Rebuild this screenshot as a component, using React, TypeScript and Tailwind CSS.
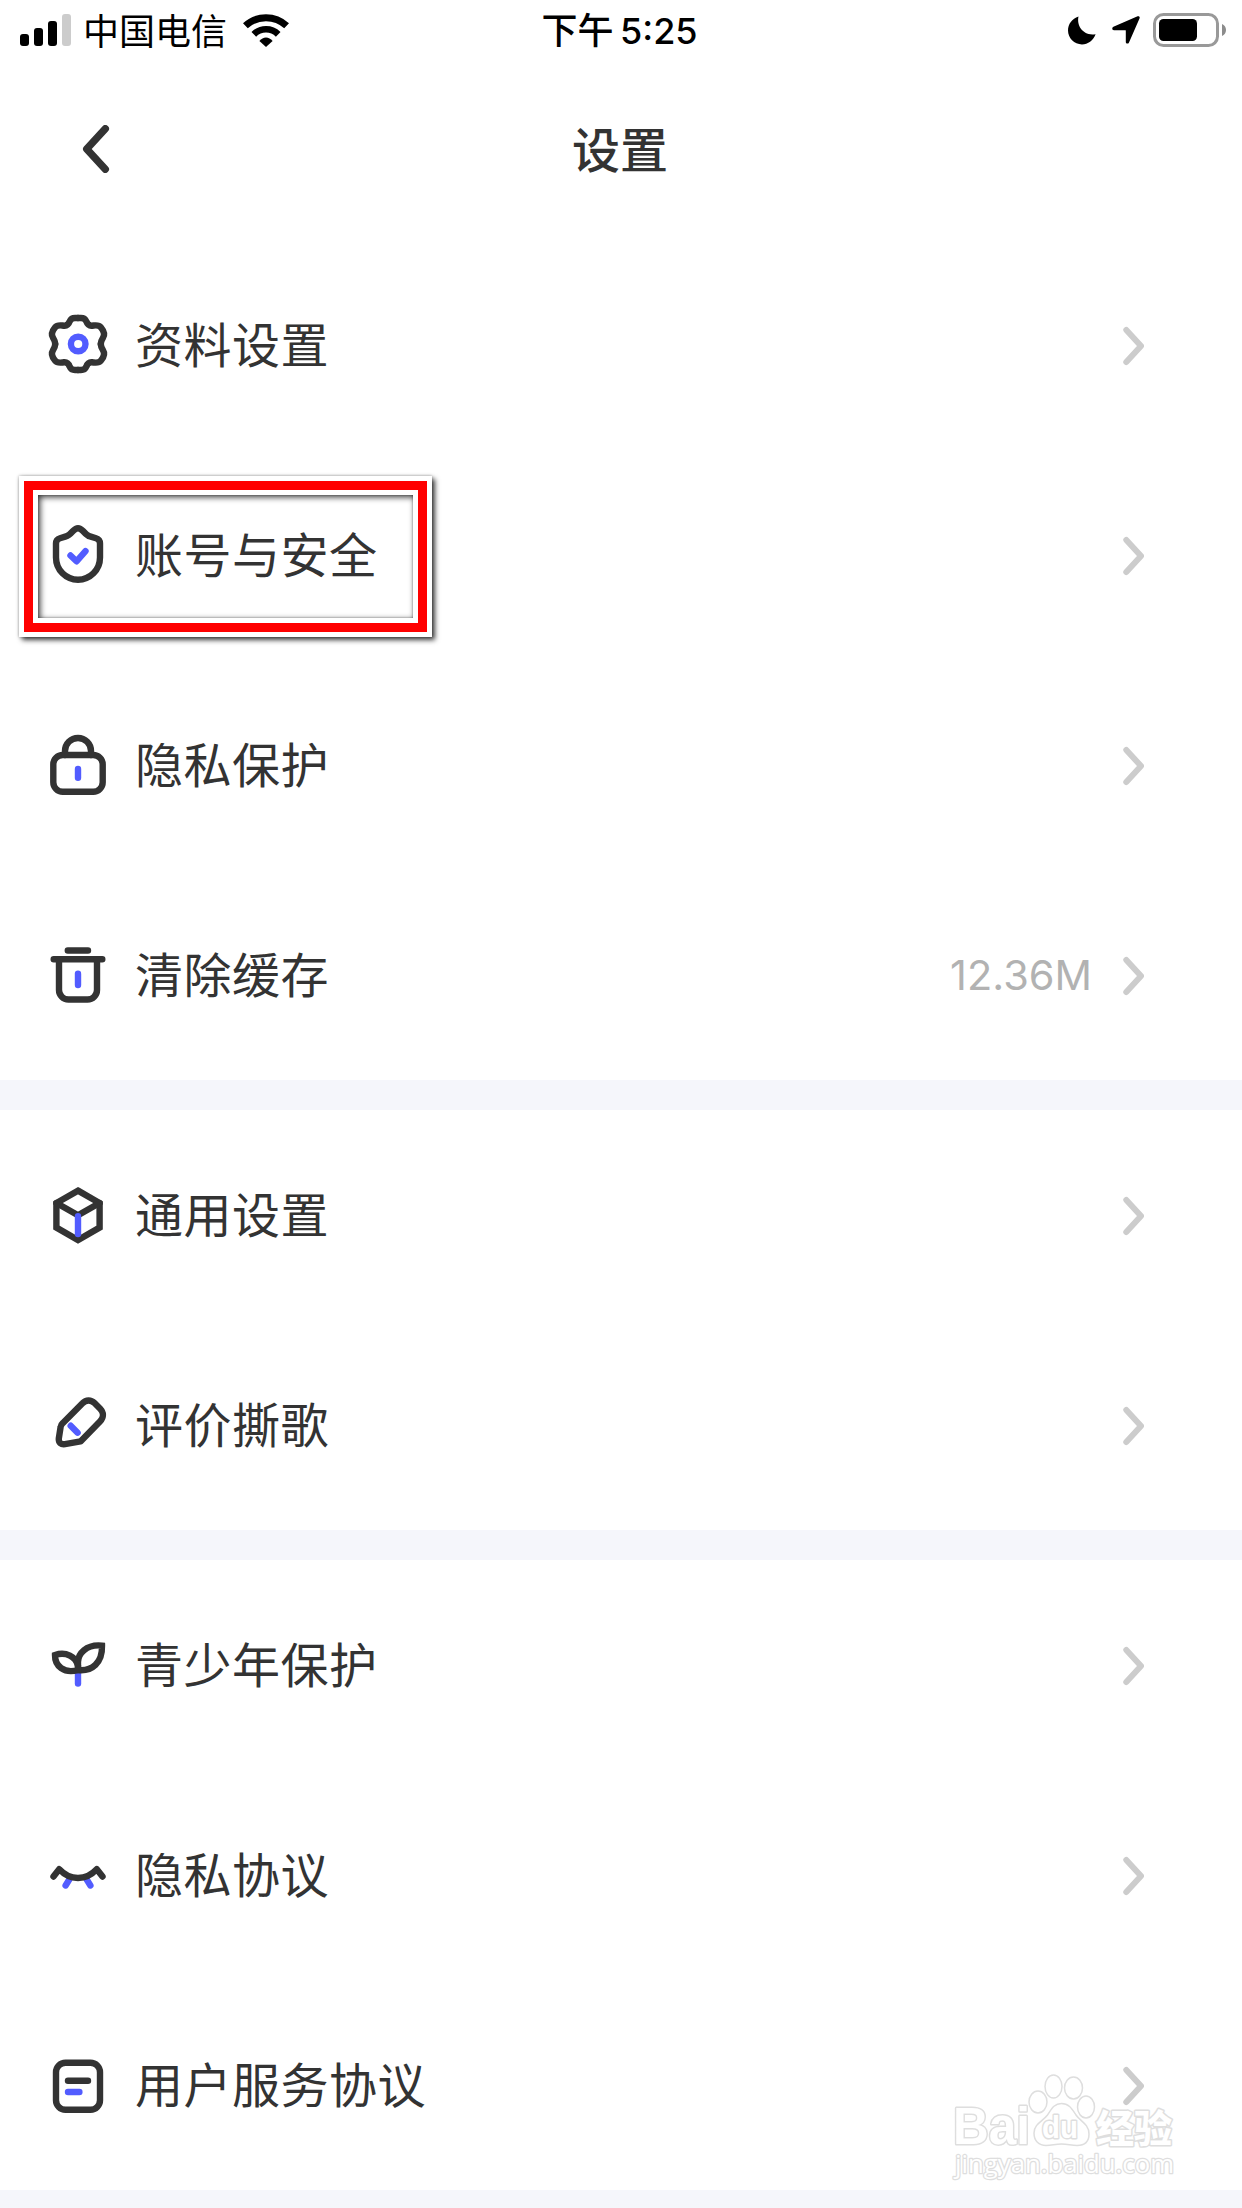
import type { ReactNode } from 'react';

const DARK = '#333333';
const BLUE = '#525cff';

interface SettingItem {
  label: string;
  icon: ReactNode;
  value?: string;
  marked?: boolean;
}

function LineIcon({ children }: { children: ReactNode }) {
  return (
    <svg
      className="w-[72px] h-[72px] -mt-0.5 shrink-0"
      viewBox="0 0 72 72"
      fill="none"
      stroke={DARK}
      strokeWidth={6.4}
      strokeLinecap="round"
      strokeLinejoin="round"
    >
      {children}
    </svg>
  );
}

// one quarter of the gear outline, mirrored around the centre
const GEAR_QUARTER =
  'M36 10H39C42 10 43.3 11 44.2 13.2C45.3 16.2 46.8 18 50 17.700C53.500 17.300 56.500 16.300 59 19.400C62.400 23.500 63.200 26.300 61 29.700C59.200 32.500 58.800 34.200 58.800 36';

const GearIcon = () => (
  <LineIcon>
    <path d={GEAR_QUARTER} />
    <path d={GEAR_QUARTER} transform="matrix(-1 0 0 1 72 0)" />
    <path d={GEAR_QUARTER} transform="matrix(1 0 0 -1 0 72)" />
    <path d={GEAR_QUARTER} transform="matrix(-1 0 0 -1 72 72)" />
    <circle cx="36.200" cy="36" r="7.300" stroke={BLUE} />
  </LineIcon>
);

const ShieldIcon = () => (
  <LineIcon>
    <path d="M36 10.2C34 10.2 32.7 11.2 31 13C28 16.3 26.5 17.8 24 18.4L18 20.2C15.5 21 14 22.4 14 25.4V39.5C14 52 24 61.7 36 61.7C48 61.7 58 52 58 39.5V25.4C58 22.4 56.5 21 54 20.2L48 18.4C45.5 17.8 44 16.3 41 13C39.3 11.2 38 10.2 36 10.2Z" />
    <path d="M28.5 37.5L34.5 43.3L43.5 33.2" stroke={BLUE} />
  </LineIcon>
);

const LockIcon = () => (
  <LineIcon>
    <rect x="11.3" y="27" width="49.4" height="36.7" rx="9.5" />
    <path d="M23 27V23A13 13 0 0 1 49 23V27" />
    <path d="M36 41V49.7" stroke={BLUE} />
  </LineIcon>
);

const TrashIcon = () => (
  <LineIcon>
    <path d="M25.8 12.5H46M11.7 21.2H60.3" />
    <path d="M17 21.2V52A9.5 9.5 0 0 0 26.5 61.5H45.5A9.5 9.5 0 0 0 55 52V21.2" />
    <path d="M36 35.7V47" stroke={BLUE} />
  </LineIcon>
);

const CubeIcon = () => (
  <LineIcon>
    <path d="M36 12.6L57.6 25V49.6L36 62L14.4 49.6V25Z" strokeLinejoin="miter" />
    <path d="M14.4 25L36 37.2L57.6 25" />
    <path d="M36 38.3V56" stroke={BLUE} />
  </LineIcon>
);

const PenIcon = () => (
  <LineIcon>
    <path d="M20.7 35.2L40.5 15.3C44 11.6 49 11.6 52.5 15.1L58.2 20.8C61.8 24.5 61.8 29.5 58.2 33.2L38.5 53.4L23 56.2C19 56.8 16.4 54.5 16.8 50.5L18.6 39C18.8 37.3 19.5 36.3 20.7 35.2Z" />
    <path d="M28.7 37.7L35.6 44.7" stroke={BLUE} />
  </LineIcon>
);

const SproutIcon = () => (
  <LineIcon>
    <path d="M36 42V55.5" stroke={BLUE} />
    <g strokeLinejoin="miter">
      <path d="M60 17.6C44 16 36 26 36 34V42C50 43.5 60.5 35 60 17.6Z" />
      <path d="M13 27C24 23.4 34 28.5 36 38V42C22 46 12.8 38 13 27Z" />
    </g>
  </LineIcon>
);

const EyeClosedIcon = () => (
  <LineIcon>
    <path d="M27.3 41.5L23.6 47.5M44.7 41.5L48.4 47.5" stroke={BLUE} />
    <path d="M11.5 38.5L17.2 31.2C28 43 44 43 54.8 31.2L60.5 38.5" />
  </LineIcon>
);

const DocIcon = () => (
  <LineIcon>
    <rect x="14" y="14.7" width="44" height="47" rx="9.5" />
    <path d="M26 32.7H46" />
    <path d="M26 44H37.4" stroke={BLUE} />
  </LineIcon>
);

const groups: SettingItem[][] = [
  [
    { label: '资料设置', icon: <GearIcon /> },
    { label: '账号与安全', icon: <ShieldIcon />, marked: true },
    { label: '隐私保护', icon: <LockIcon /> },
    { label: '清除缓存', icon: <TrashIcon />, value: '12.36M' },
  ],
  [
    { label: '通用设置', icon: <CubeIcon /> },
    { label: '评价撕歌', icon: <PenIcon /> },
  ],
  [
    { label: '青少年保护', icon: <SproutIcon /> },
    { label: '隐私协议', icon: <EyeClosedIcon /> },
    { label: '用户服务协议', icon: <DocIcon /> },
  ],
];

function StatusBar() {
  return (
    <div className="h-[60px] grid grid-cols-3 items-center pl-5 pr-4 text-black text-[36px] leading-none">
      <div className="flex items-center">
        <div className="flex items-end gap-[5px] h-8">
          <span className="w-[9px] h-3 rounded-[3px] bg-black" />
          <span className="w-[9px] h-[18px] rounded-[3px] bg-black" />
          <span className="w-[9px] h-[25px] rounded-[3px] bg-black" />
          <span className="w-[9px] h-8 rounded-[3px] bg-[#cccccc]" />
        </div>
        <span className="ml-3 mt-[3px]">中国电信</span>
        <svg className="ml-4 w-[46px] h-[33px]" viewBox="0 0 46 33" fill="none" stroke="#000" strokeWidth="7">
          <path d="M2.4 11.8A30.3 30.3 0 0 1 43.6 11.8" />
          <path d="M10.8 20.3A17.4 17.4 0 0 1 35.2 20.3" strokeWidth="6.6" />
          <path d="M16.4 27C20 22.2 26 22.2 29.6 27L23 33Z" fill="#000" stroke="none" />
        </svg>
      </div>
      <div className="flex justify-center pr-[7px] pt-0.5 font-medium [word-spacing:-3px]">下午 5:25</div>
      <div className="flex items-center justify-end">
        <svg className="w-7 h-[29px]" viewBox="0 0 28 29">
          <path d="M10.5 0.6C8.4 9.5 15 20.4 27.6 18.2C25.2 24.4 20 28.4 14 28.4C6.2 28.4 0 22.2 0 14.6C0 8.4 4 2.6 10.5 0.6Z" />
        </svg>
        <svg className="ml-4 w-7 h-7" viewBox="0 0 28 28">
          <path d="M25.6 0.3C27.2 -0.2 28 0.8 27.6 2.2L17 26.4C16.2 28.2 13.8 27.8 13.8 26V14.8C13.8 14.3 13.6 14.2 13.2 14.2H2C0 14.2 -0.4 11.6 1.4 10.8Z" />
        </svg>
        <svg className="ml-[13px] w-[73px] h-[34px]" viewBox="0 0 73 34">
          <rect x="1.5" y="1.5" width="63" height="31" rx="9" fill="none" stroke="#999999" strokeWidth="3" />
          <rect x="6" y="6" width="38" height="22" rx="4.5" />
          <path d="M69 11C71.4 12 73 14.3 73 17C73 19.7 71.4 22 69 23Z" fill="#8c8c8c" />
        </svg>
      </div>
    </div>
  );
}

function NavBar() {
  return (
    <div className="h-[180px] grid grid-cols-3 items-center px-20">
      <svg className="w-8 h-12 -mt-0.5" viewBox="0 0 32 48" fill="none" stroke={DARK} strokeWidth="7.4" strokeLinecap="round" strokeLinejoin="round">
        <path d="M25.3 3.7L6.7 23.9L25.3 44.3" />
      </svg>
      <h1 className="pr-0.5 pt-0.5 text-center text-[48px] leading-none font-medium text-[#333333]">设置</h1>
    </div>
  );
}

// callout frame: white / red / white rings with an outer and an inner shadow
function MarkFrame() {
  return (
    <div className="absolute left-[19px] top-[26px] w-[413px] h-[161px] border-5 border-white shadow-[3px_3px_5px_rgba(0,0,0,0.75),0_0_3px_rgba(0,0,0,0.35)]">
      <div className="h-full border-9 border-[#ff0000]">
        <div className="h-full border-5 border-white">
          <div className="h-full shadow-[inset_2px_2px_6px_rgba(0,0,0,0.8),inset_0_0_2px_rgba(0,0,0,0.4)]" />
        </div>
      </div>
    </div>
  );
}

function SettingRow({ item }: { item: SettingItem }) {
  return (
    <div className="relative h-[210px] flex items-center pl-[42px] pr-[98px]">
      {item.marked && <MarkFrame />}
      <div className="relative flex items-center flex-1">
        {item.icon}
        <span className="ml-[21px] mt-0.5 text-[48px] leading-none tracking-[0.5px] text-[#333333]">{item.label}</span>
      </div>
      {item.value && <span className="mt-0.5 mr-[30px] text-[41.5px] leading-none text-[#b2b2b2]">{item.value}</span>}
      <svg className="mt-0.5 w-[22px] h-10" viewBox="0 0 22 40" fill="none" stroke="#cccccc" strokeWidth="6" strokeLinecap="round" strokeLinejoin="round">
        <path d="M4.3 3.9L19 20L4.3 36.1" />
      </svg>
    </div>
  );
}

function Watermark() {
  return (
    <svg
      className="absolute left-[950px] top-[2070px] w-[230px] h-[116px]"
      viewBox="0 0 230 116"
      fill="#ffffff"
      stroke="#dedede"
      strokeWidth="1.5"
      strokeLinejoin="round"
    >
      <g className="font-['Liberation_Sans'] font-bold" paintOrder="stroke" strokeWidth="3">
        <text x="3" y="74" fontSize="51" textLength="77" lengthAdjust="spacingAndGlyphs">Bai</text>
      </g>
      <ellipse cx="88" cy="32" rx="9" ry="11" />
      <ellipse cx="103.5" cy="16.5" rx="8.5" ry="11.5" />
      <ellipse cx="123.5" cy="18" rx="9" ry="11" />
      <ellipse cx="136" cy="37" rx="8.5" ry="11" />
      <path d="M111.5 33.5C119 33.5 122 39 126 45C130 51 139 54 139 64C139 72 134 75.5 127 75.5C121 75.5 118 74 111.5 74C105 74 102 75.5 96 75.5C89 75.5 84 71 84 63C84 54 93 51 97.5 45C101.5 39 104 33.5 111.5 33.5Z" />
      <g className="font-['Liberation_Sans'] font-bold" paintOrder="stroke" strokeWidth="3">
        <text x="92" y="68" fontSize="32" textLength="36" lengthAdjust="spacingAndGlyphs">du</text>
      </g>
      <g className="font-['Noto_Sans_CJK_SC'] font-black" paintOrder="stroke" strokeWidth="3">
        <text x="146" y="72" fontSize="38" textLength="76" lengthAdjust="spacingAndGlyphs">经验</text>
      </g>
      <g className="font-['Open_Sans']" paintOrder="stroke" strokeWidth="2.5">
        <text x="5" y="103" fontSize="25" textLength="219" lengthAdjust="spacingAndGlyphs">jingyan.baidu.com</text>
      </g>
    </svg>
  );
}

export default function App() {
  return (
    <div className="relative w-[1242px] h-[2208px] overflow-hidden bg-white font-[Inter,'Noto_Sans_CJK_SC',sans-serif]">
      <StatusBar />
      <NavBar />
      {groups.map((items, index) => (
        <section key={index} className="border-b-30 border-[#f5f6fb]">
          {items.map((item) => (
            <SettingRow key={item.label} item={item} />
          ))}
        </section>
      ))}
      <Watermark />
    </div>
  );
}
